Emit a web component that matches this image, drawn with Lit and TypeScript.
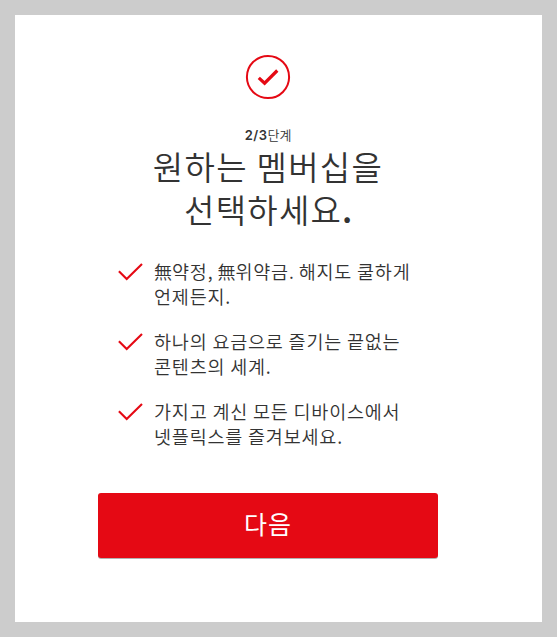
import { LitElement, html, css } from "lit";
import { customElement } from "lit/decorators.js";

const features = [
  [html`<i>無</i>약정<i>,</i> <i>無</i>위약금<i>.</i> 해지도 쿨하게`, "언제든지."],
  ["하나의 요금으로 즐기는 끝없는", "콘텐츠의 세계."],
  ["가지고 계신 모든 디바이스에서", "넷플릭스를 즐겨보세요."],
];

@customElement("app-root")
export class AppRoot extends LitElement {
  static styles = css`
    :host {
      display: block;
      box-sizing: border-box;
      height: 637px;
      border: 15px solid #ccc;
      background: #fff;
      color: #333;
      font-family: "Noto Sans CJK KR", sans-serif;
      font-weight: 350;
    }
    .page { width: 340px; margin-left: 83px; padding-top: 39px; }
    .badge { display: block; margin: 0 auto; width: 46px; height: 46px; }
    .step { height: 20px; margin-top: 25px; text-align: center; font-size: 13px; line-height: 19px; letter-spacing: 0; }
    .step b { font-family: Inter, sans-serif; font-weight: 600; letter-spacing: 0.5px; }
    h1 { height: 86px; margin: 0; text-align: center; font-size: 33px; line-height: 43px; font-weight: 350; letter-spacing: 1.3px; }
    .dot { font-weight: 700; font-size: 30px; line-height: 1; letter-spacing: 0; }
    ul { list-style: none; margin: 28px 0 0 19px; padding: 0; display: grid; gap: 20px; }
    li { display: flex; gap: 11px; font-size: 18.5px; line-height: 25px; white-space: nowrap; letter-spacing: 0.8px; }
    li i { font-style: normal; font-size: 18px; line-height: 1; letter-spacing: 0; }
    .tick { flex: none; width: 26px; height: 26px; }
    .next {
      display: block; width: 340px; height: 65px; margin-top: 44px; padding: 0 0 6px; border: 0;
      border-radius: 3px; background: #e50914; color: #fff; font: inherit; font-size: 25px;
      font-weight: 400; letter-spacing: 1px;
      box-shadow: 0 1px 0 rgba(0, 0, 0, 0.3);
    }
  `;

  render() {
    return html`<main class="page">
      <svg class="badge" viewBox="0 0 46 46" fill="none" stroke="#e50914">
        <circle cx="23" cy="23" r="21.1" stroke-width="2" />
        <path d="M13.8 23.8 L19.6 29.2 L32.3 16.5" stroke-width="3.2" />
      </svg>
      <div class="step"><b>2/3</b>단계</div>
      <h1>원하는 멤버십을<br />선택하세요<span class="dot">.</span></h1>
      <ul>
        ${features.map(
          ([a, b]) => html`<li>
            <svg class="tick" viewBox="0 0 26 26" fill="none" stroke="#e50914" stroke-width="2.1">
              <path d="M1.9 12.3 L9.7 20.1 L25 5" />
            </svg>
            <span>${a}<br />${b}</span>
          </li>`
        )}
      </ul>
      <button class="next">다음</button>
    </main>`;
  }
}
